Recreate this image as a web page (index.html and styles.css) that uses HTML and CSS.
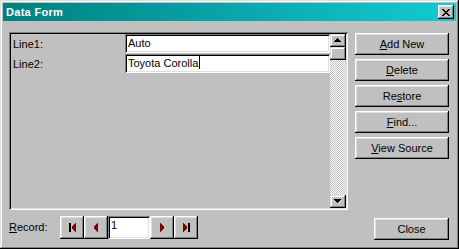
FILE: index.html
```html
<!DOCTYPE html>
<html lang="en">
  <head>
    <meta charset="UTF-8" />
    <meta name="viewport" content="width=device-width, initial-scale=1.0" />
    <title>Data Form</title>
    <link rel="stylesheet" href="styles.css">
  </head>
  <body>
    <div class="window">
      <div class="titlebar">
        <span class="title">Data Form</span>
        <button class="title-close">
          <svg width="8" height="7" viewBox="0 0 8 7" shape-rendering="crispEdges">
            <path d="M0 0h2v1h1v1h2v-1h1v-1h2v1h-1v1h-1v1h-1v1h1v1h1v1h1v1h-2v-1h-1v-1h-2v1h-1v1h-2v-1h1v-1h1v-1h1v-1h-1v-1h-1v-1h-1z" fill="#000"/>
          </svg>
        </button>
      </div>

      <div class="content">
        <div class="main">
          <div class="panel">
            <div class="fields">
              <div class="row">
                <label class="row-label">Line1:</label>
                <div class="field">Auto</div>
              </div>
              <div class="row">
                <label class="row-label">Line2:</label>
                <div class="field">Toyota Corolla<span class="caret"></span></div>
              </div>
            </div>
            <div class="scrollbar">
              <div class="sb-btn">
                <svg width="7" height="4" viewBox="0 0 7 4" shape-rendering="crispEdges"><path d="M3 0h1v1h1v1h1v1h1v1h-7v-1h1v-1h1v-1h1z" fill="#000"/></svg>
              </div>
              <div class="sb-thumb"></div>
              <div class="sb-track"></div>
              <div class="sb-btn">
                <svg width="7" height="4" viewBox="0 0 7 4" shape-rendering="crispEdges"><path d="M0 0h7v1h-1v1h-1v1h-1v1h-1v-1h-1v-1h-1v-1h-1z" fill="#000"/></svg>
              </div>
            </div>
          </div>

          <div class="actions">
            <button class="btn"><u>A</u>dd New</button>
            <button class="btn"><u>D</u>elete</button>
            <button class="btn">Re<u>s</u>tore</button>
            <button class="btn"><u>F</u>ind...</button>
            <button class="btn"><u>V</u>iew Source</button>
          </div>
        </div>

        <div class="footer">
          <span class="record-label"><u>R</u>ecord:</span>
          <div class="nav">
            <button class="btn nav-btn">
              <svg width="7" height="9" viewBox="0 0 7 9" shape-rendering="crispEdges"><rect x="0" y="0" width="2" height="9" fill="#000"/><path d="M6 0h1v9h-1v-1h-1v-1h-1v-1h-1v-3h1v-1h1v-1h1z" fill="#800000"/></svg>
            </button>
            <button class="btn nav-btn">
              <svg width="4" height="9" viewBox="0 0 4 9" shape-rendering="crispEdges"><path d="M3 0h1v9h-1v-1h-1v-1h-1v-1h-1v-3h1v-1h1v-1h1z" fill="#800000"/></svg>
            </button>
            <div class="record-field">1</div>
            <button class="btn nav-btn">
              <svg width="4" height="9" viewBox="0 0 4 9" shape-rendering="crispEdges"><path d="M0 0h1v1h1v1h1v1h1v3h-1v1h-1v1h-1v1h-1z" fill="#800000"/></svg>
            </button>
            <button class="btn nav-btn">
              <svg width="7" height="9" viewBox="0 0 7 9" shape-rendering="crispEdges"><path d="M0 0h1v1h1v1h1v1h1v3h-1v1h-1v1h-1v1h-1z" fill="#800000"/><rect x="5" y="0" width="2" height="9" fill="#000"/></svg>
            </button>
          </div>
          <button class="btn close-btn">Close</button>
        </div>
      </div>
    </div>
  </body>
</html>
```

FILE: styles.css
```css
body {
  margin: 0;
  padding: 0;
  background-color: #c0c0c0;
  font-family: "Liberation Sans", Arial, sans-serif;
  font-size: 11px;
  color: #000;
}

.window {
  width: 459px;
  height: 249px;
  box-sizing: border-box;
  padding: 3px;
  background-color: #c0c0c0;
  box-shadow: inset -1px -1px #000, inset 1px 1px #dfdfdf,
    inset -2px -2px #808080, inset 2px 2px #fff;
}

.titlebar {
  height: 18px;
  display: flex;
  align-items: center;
  justify-content: space-between;
  padding: 0 2px 0 3px;
  background: linear-gradient(to right, #008080, #12cbd3);
}

.title {
  color: #fff;
  font-weight: bold;
  font-size: 11px;
  letter-spacing: 0.3px;
}

.title-close {
  width: 16px;
  height: 14px;
  padding: 0;
  border: none;
  background-color: #c0c0c0;
  display: flex;
  align-items: center;
  justify-content: center;
  box-shadow: inset -1px -1px #000, inset 1px 1px #fff,
    inset -2px -2px #808080, inset 2px 2px #dfdfdf;
}

.title-close svg {
  display: block;
  margin: 0 0 0 -1px;
}

.content {
  padding: 11px 7px 0 6px;
}

.main {
  display: flex;
  gap: 7px;
}

.panel {
  width: 339px;
  height: 178px;
  box-sizing: border-box;
  padding: 2px;
  display: flex;
  box-shadow: inset 1px 1px #808080, inset -1px -1px #fff,
    inset 2px 2px #000, inset -2px -2px #dfdfdf;
}

.fields {
  flex: 1;
  padding-left: 2px;
  display: flex;
  flex-direction: column;
  gap: 1px;
}

.row {
  display: flex;
}

.row-label {
  width: 112px;
  padding-top: 3px;
  line-height: 15px;
}

.field {
  flex: 1;
  height: 19px;
  box-sizing: border-box;
  padding: 2px 3px;
  line-height: 15px;
  background-color: #fff;
  white-space: nowrap;
  box-shadow: inset 1px 1px #808080, inset -1px -1px #fff,
    inset 2px 2px #000, inset -2px -2px #dfdfdf;
}

.caret {
  display: inline-block;
  width: 1px;
  height: 13px;
  margin-left: 1px;
  vertical-align: -2px;
  background-color: #000;
}

.scrollbar {
  width: 16px;
  display: flex;
  flex-direction: column;
}

.sb-btn,
.sb-thumb {
  height: 13px;
  background-color: #c0c0c0;
  box-shadow: inset -1px -1px #000, inset 1px 1px #dfdfdf,
    inset -2px -2px #808080, inset 2px 2px #fff;
}

.sb-btn {
  display: flex;
  align-items: center;
  justify-content: center;
}

.sb-btn svg {
  display: block;
  margin: 0 1px 1px 0;
}

.sb-track {
  flex: 1;
  background-image: repeating-conic-gradient(#fff 0 25%, #c0c0c0 0 50%);
  background-size: 2px 2px;
}

.actions {
  width: 94px;
  margin-top: 1px;
  display: flex;
  flex-direction: column;
  gap: 4px;
}

.btn {
  height: 22px;
  padding: 0 0 1px;
  border: none;
  background-color: #c0c0c0;
  font-family: inherit;
  font-size: 11px;
  color: #000;
  box-shadow: inset -1px -1px #000, inset 1px 1px #fff,
    inset -2px -2px #808080, inset 2px 2px #dfdfdf;
}

.btn u {
  text-underline-offset: 1px;
}

.footer {
  margin-top: 6px;
  display: flex;
  align-items: flex-start;
}

.record-label {
  width: 51px;
  padding-top: 5px;
  line-height: 13px;
}

.nav {
  display: flex;
}

.nav-btn {
  width: 24px;
  height: 23px;
  display: flex;
  align-items: center;
  justify-content: center;
}

.nav-btn svg {
  display: block;
}

.record-field {
  width: 42px;
  height: 23px;
  box-sizing: border-box;
  padding: 2px 3px;
  line-height: 15px;
  background-color: #fff;
  box-shadow: inset 1px 1px #808080, inset -1px -1px #fff,
    inset 2px 2px #000, inset -2px -2px #dfdfdf;
}

.close-btn {
  width: 75px;
  margin-top: 2px;
  margin-left: auto;
}
```
